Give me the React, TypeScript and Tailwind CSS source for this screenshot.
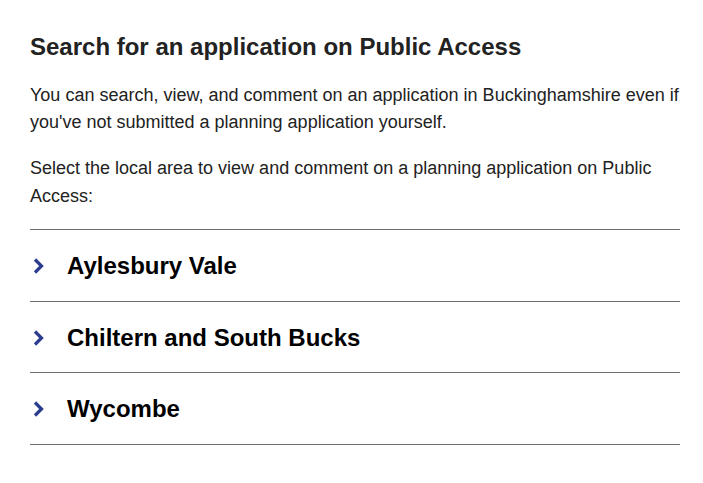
const areas = ['Aylesbury Vale', 'Chiltern and South Bucks', 'Wycombe']

const Chevron = () => (
  <svg width="13" height="18" viewBox="0 0 13 18" className="shrink-0">
    <path d="M3 2.5 L9.5 9 L3 15.5" fill="none" stroke="#2a3c8e" strokeWidth="3.2" />
  </svg>
)

export default function App() {
  return (
    <div className="min-h-screen bg-white font-['Liberation_Sans',Arial,sans-serif]">
      <div className="w-[650px] ml-[30px] pt-[32px]">
        <h2 className="text-[24px] leading-[30px] font-bold text-[#222222]">
          Search for an application on Public Access
        </h2>
        <p className="mt-[20px] text-[18px] leading-[27px] text-[#222222]">
          You can search, view, and comment on an application in Buckinghamshire even if you've not submitted a planning application yourself.
        </p>
        <p className="mt-[18px] text-[18px] leading-[28px] text-[#222222]">
          Select the local area to view and comment on a planning application on Public Access:
        </p>
        <div className="mt-[19px] border-t border-[#6f6f6f]">
          {areas.map((a) => (
            <div key={a} className="flex items-center h-[71.5px] border-b border-[#6f6f6f] pt-[2px]">
              <div className="w-[37px] flex pl-[2px]">
                <Chevron />
              </div>
              <span className="text-[24px] font-bold text-black">{a}</span>
            </div>
          ))}
        </div>
      </div>
    </div>
  )
}
